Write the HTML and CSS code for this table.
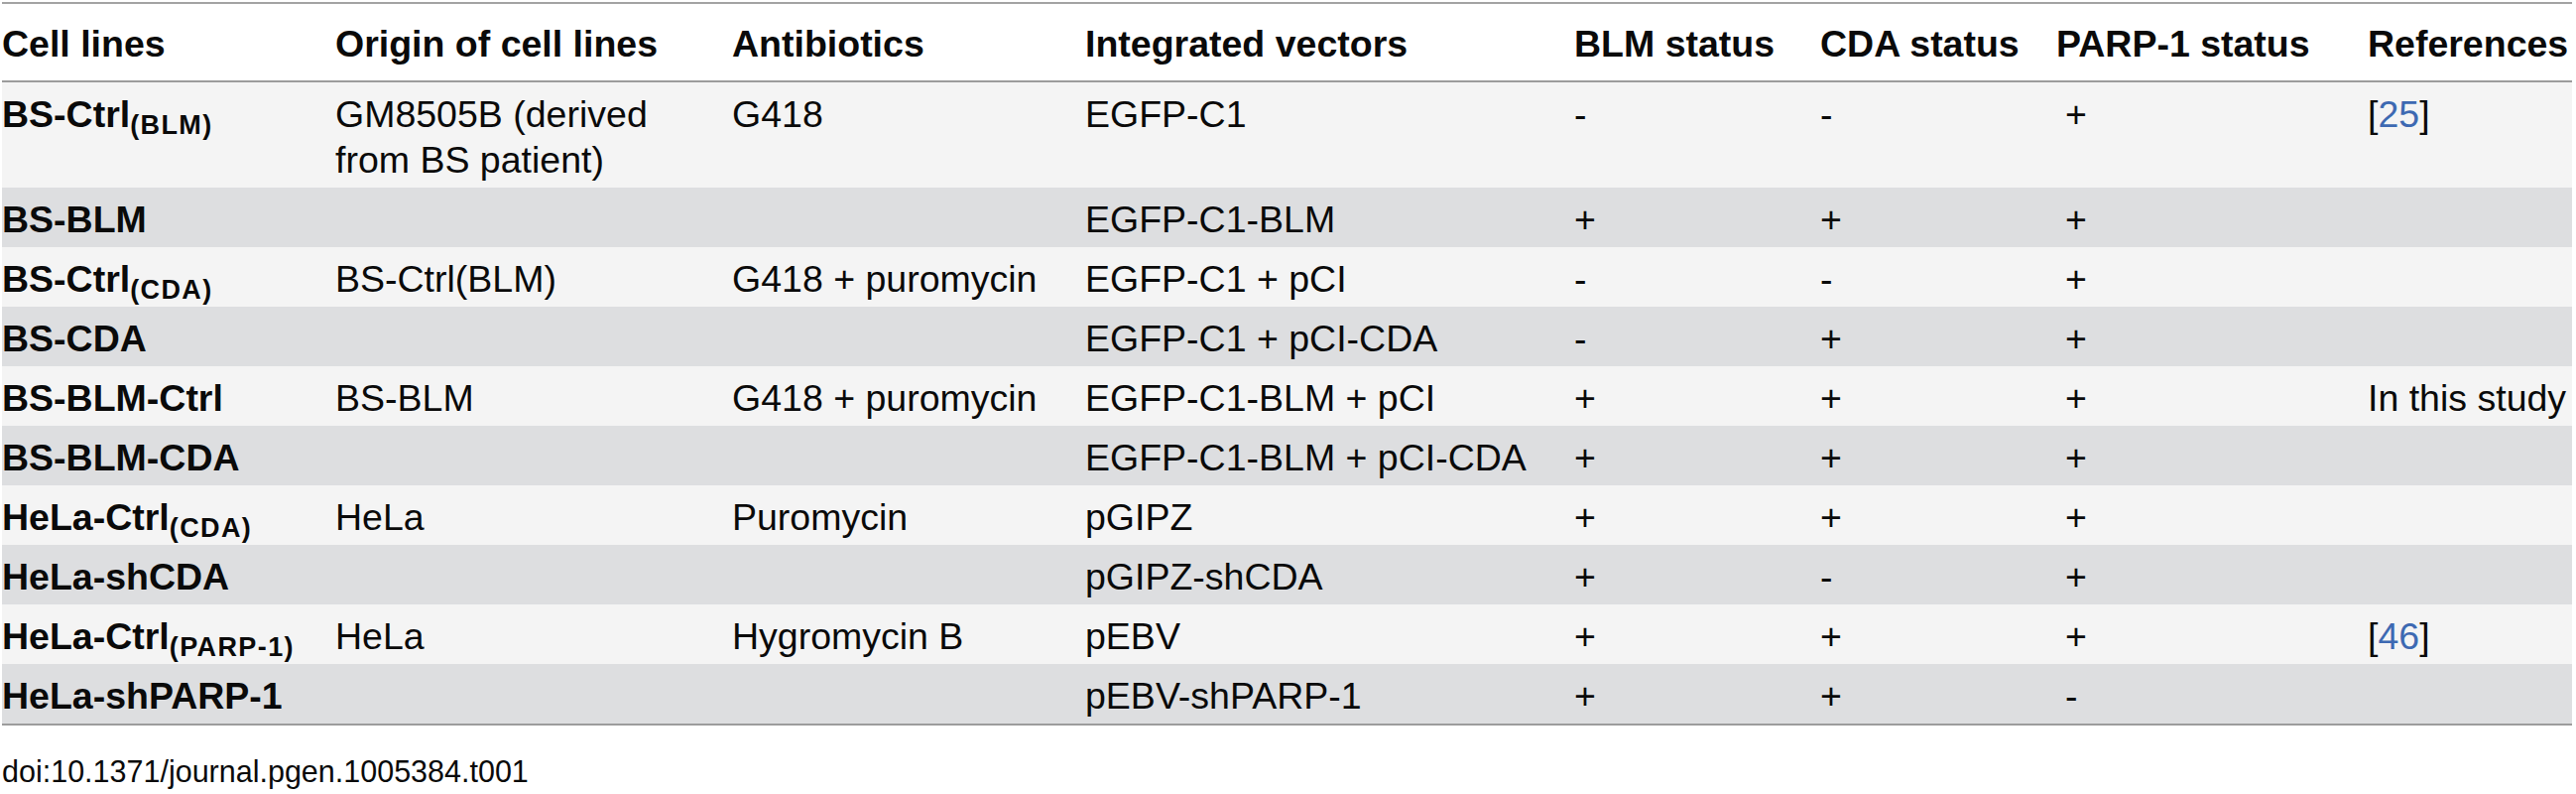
FILE: index.html
```html
<!DOCTYPE html>
<html lang="en">
<head>
<meta charset="utf-8">
<title>Table 1</title>
<link rel="stylesheet" href="styles.css">
</head>
<body>
<table class="data">
  <colgroup>
    <col class="c1"><col class="c2"><col class="c3"><col class="c4"><col class="c5"><col class="c6"><col class="c7"><col class="c8">
  </colgroup>
  <thead>
    <tr>
      <th>Cell lines</th><th>Origin of cell lines</th><th>Antibiotics</th><th>Integrated vectors</th><th>BLM status</th><th>CDA status</th><th>PARP-1 status</th><th>References</th>
    </tr>
  </thead>
  <tbody>
    <tr>
      <td class="name">BS-Ctrl<sub>(BLM)</sub></td><td>GM8505B (derived<br>from BS patient)</td><td>G418</td><td>EGFP-C1</td><td>-</td><td>-</td><td class="parp">+</td><td>[<a class="ref" href="#">25</a>]</td>
    </tr>
    <tr>
      <td class="name">BS-BLM</td><td></td><td></td><td>EGFP-C1-BLM</td><td>+</td><td>+</td><td class="parp">+</td><td></td>
    </tr>
    <tr>
      <td class="name">BS-Ctrl<sub>(CDA)</sub></td><td>BS-Ctrl(BLM)</td><td>G418 + puromycin</td><td>EGFP-C1 + pCI</td><td>-</td><td>-</td><td class="parp">+</td><td></td>
    </tr>
    <tr>
      <td class="name">BS-CDA</td><td></td><td></td><td>EGFP-C1 + pCI-CDA</td><td>-</td><td>+</td><td class="parp">+</td><td></td>
    </tr>
    <tr>
      <td class="name">BS-BLM-Ctrl</td><td>BS-BLM</td><td>G418 + puromycin</td><td>EGFP-C1-BLM + pCI</td><td>+</td><td>+</td><td class="parp">+</td><td>In this study</td>
    </tr>
    <tr>
      <td class="name">BS-BLM-CDA</td><td></td><td></td><td>EGFP-C1-BLM + pCI-CDA</td><td>+</td><td>+</td><td class="parp">+</td><td></td>
    </tr>
    <tr>
      <td class="name">HeLa-Ctrl<sub>(CDA)</sub></td><td>HeLa</td><td>Puromycin</td><td>pGIPZ</td><td>+</td><td>+</td><td class="parp">+</td><td></td>
    </tr>
    <tr>
      <td class="name">HeLa-shCDA</td><td></td><td></td><td>pGIPZ-shCDA</td><td>+</td><td>-</td><td class="parp">+</td><td></td>
    </tr>
    <tr>
      <td class="name">HeLa-Ctrl<sub>(PARP-1)</sub></td><td>HeLa</td><td>Hygromycin B</td><td>pEBV</td><td>+</td><td>+</td><td class="parp">+</td><td>[<a class="ref" href="#">46</a>]</td>
    </tr>
    <tr>
      <td class="name">HeLa-shPARP-1</td><td></td><td></td><td>pEBV-shPARP-1</td><td>+</td><td>+</td><td class="parp">-</td><td></td>
    </tr>
  </tbody>
</table>
<p class="doi">doi:10.1371/journal.pgen.1005384.t001</p>
</body>
</html>
```
FILE: styles.css
```css
html, body {
  margin: 0;
  padding: 0;
  background: #ffffff;
}

body {
  font-family: "Liberation Sans", Arial, Helvetica, sans-serif;
  color: #0a0a0a;
}

.data {
  margin: 2px 0 0 2px;
  width: 2591px;
  table-layout: fixed;
  border-collapse: separate;
  border-spacing: 0;
  font-size: 37.5px;
  line-height: 46px;
}

.c1 { width: 336px; }
.c2 { width: 400px; }
.c3 { width: 356px; }
.c4 { width: 493px; }
.c5 { width: 248px; }
.c6 { width: 238px; }
.c7 { width: 314px; }
.c8 { width: 206px; }

.data th {
  text-align: left;
  font-weight: bold;
  padding: 17px 0 14px 0;
  border-top: 2px solid #a3a3a3;
  border-bottom: 2px solid #9c9c9c;
  background: #ffffff;
  white-space: nowrap;
  vertical-align: top;
}

.data td {
  padding: 9px 0 5px 0;
  vertical-align: top;
  white-space: nowrap;
}

.data tbody tr:nth-child(odd) td {
  background: #f4f4f4;
}

.data tbody tr:nth-child(even) td {
  background: #dddee0;
}

.data tbody tr:last-child td {
  border-bottom: 2px solid #9c9c9c;
}

.data td.name {
  font-weight: bold;
}

.data td.parp {
  padding-left: 9px;
}

.data sub {
  font-size: 27px;
  letter-spacing: 1.4px;
  line-height: 0;
  vertical-align: -7px;
}

.ref {
  color: #3d69b2;
  text-decoration: none;
}

.doi {
  margin: 28px 0 0 2px;
  font-size: 30.5px;
  line-height: 36px;
  color: #0a0a0a;
}
```
